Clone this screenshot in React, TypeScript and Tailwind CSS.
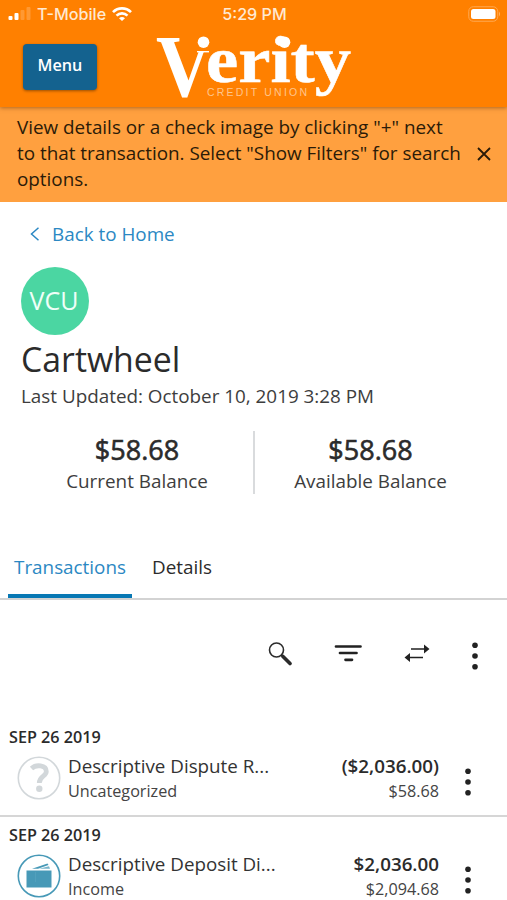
type Transaction = {
  date: string;
  title: string;
  category: string;
  amount: string;
  balance: string;
  icon: "unknown" | "wallet";
};

const transactions: Transaction[] = [
  { date: "SEP 26 2019", title: "Descriptive Dispute R...", category: "Uncategorized", amount: "($2,036.00)", balance: "$58.68", icon: "unknown" },
  { date: "SEP 26 2019", title: "Descriptive Deposit Di...", category: "Income", amount: "$2,036.00", balance: "$2,094.68", icon: "wallet" },
];

function Logo() {
  return (
    <svg width="200" height="68" viewBox="0 0 200 68" fill="#fff" className="shrink-0">
      <text x="1" y="64" fontFamily="Liberation Serif, serif" fontWeight="700" fontSize="89" textLength="57" lengthAdjust="spacingAndGlyphs">V</text>
      <rect x="32" y="0" width="40" height="20" fill="#ff8000" />
      <path d="M42 19h12v1.400h-12z" />
      <circle cx="48.500" cy="10.200" r="5.800" />
      <text x="51" y="50" fontFamily="Liberation Serif, serif" fontWeight="700" fontSize="65" textLength="145" lengthAdjust="spacingAndGlyphs" stroke="#fff" strokeWidth="0.5">erity</text>
      <circle cx="129.500" cy="10.200" r="5.800" />
      <text x="52" y="63.500" fontFamily="Liberation Sans, sans-serif" fontSize="10.500" textLength="100" fill="#ffc58c">CREDIT UNION</text>
    </svg>
  );
}

function Dots() {
  return (
    <svg width="6" height="28" viewBox="0 0 6 28" fill="#222" className="shrink-0">
      <circle cx="3" cy="3.200" r="2.800" />
      <circle cx="3" cy="14" r="2.800" />
      <circle cx="3" cy="24.800" r="2.800" />
    </svg>
  );
}

function StatusBar() {
  return (
    <div className="h-7 flex items-center justify-between font-['Inter',sans-serif] text-[16.2px] text-[#ffe9d2]">
      <div className="flex items-center w-[200px] pl-2">
        <svg width="24" height="14" viewBox="0 0 24 14" fill="#fff">
          <rect x="0.500" y="9" width="4" height="4" rx="1" />
          <rect x="6.500" y="6" width="4" height="7" rx="1" />
          <rect x="12.500" y="3" width="4" height="10" rx="1" opacity=".2" />
          <rect x="18.500" y="0" width="4" height="13" rx="1" opacity=".2" />
        </svg>
        <span className="ml-[5px] font-medium">T-Mobile</span>
        <svg width="20" height="14" viewBox="0 0 20 14" className="ml-[6px]" fill="none" stroke="#fff" strokeWidth="2.600">
          <path d="M1 5.200C6 .1 14 .1 19 5.200" />
          <path d="M4.500 8.600C7.600 5.600 12.400 5.600 15.500 8.600" />
          <path d="M7 11.200Q10 8.600 13 11.200L10 14z" fill="#fff" stroke="none" />
        </svg>
      </div>
      <span className="font-medium pl-[2px]">5:29 PM</span>
      <div className="w-[200px] pr-[6px] flex justify-end">
        <svg width="33" height="16" viewBox="0 0 33 16">
          <rect x="0.750" y="0.750" width="29" height="14.500" rx="4.500" fill="none" stroke="#ffa850" />
          <rect x="3" y="3" width="24.500" height="10" rx="2.500" fill="#fff" />
          <path d="M31 5.500q2 2.500 0 5z" fill="#ffb060" />
        </svg>
      </div>
    </div>
  );
}

function CategoryIcon({ icon }: { icon: Transaction["icon"] }) {
  if (icon === "unknown") {
    return (
      <svg width="44" height="44" viewBox="0 0 44 44" className="shrink-0">
        <circle cx="22" cy="22" r="20.700" fill="none" stroke="#d2d7da" strokeWidth="1.600" />
        <path d="M14.500 12.500C19 8.300 29.300 8.800 29.300 15.500C29.300 20.500 22.300 20 22.300 27" fill="none" stroke="#d2d7da" strokeWidth="4.800" />
        <circle cx="22.300" cy="32.700" r="3.200" fill="#d2d7da" />
      </svg>
    );
  }
  return (
    <svg width="44" height="44" viewBox="0 0 44 44" className="shrink-0">
      <circle cx="22" cy="22" r="20.700" fill="none" stroke="#4799b7" strokeWidth="1.600" />
      <path d="M9.500 16.500H34.500V33.500H9.500z" fill="#4799b7" />
      <path d="M15 14.800L30.500 9.500L31.500 11L21 14.800z" fill="#4799b7" />
      <path d="M22 14.800L32 12.200L33 14.800z" fill="#77b4cb" />
      <path d="M18.500 18V28" stroke="#58a3bf" strokeWidth=".7" />
    </svg>
  );
}

function TransactionRow({ item }: { item: Transaction }) {
  return (
    <li className="h-[98px] border-b-2 border-[#d6d6d6] pt-2 pl-[9px]">
      <div className="h-[21px] leading-[21px] text-[16.2px] font-semibold">{item.date}</div>
      <div className="flex items-start pl-2">
        <div className="pt-[8px]">
          <CategoryIcon icon={item.icon} />
        </div>
        <div className="ml-[7px] pt-[5px] w-[215px]">
          <div className="h-[26px] leading-[26px] text-[18.8px] whitespace-nowrap text-[#333]">{item.title}</div>
          <div className="leading-6 text-[16.2px] text-[#444]">{item.category}</div>
        </div>
        <div className="pt-[5px] w-[156px] text-right">
          <div className="h-[26px] leading-[26px] text-[18.8px] font-semibold">{item.amount}</div>
          <div className="leading-6 text-[16.2px] text-[#444]">{item.balance}</div>
        </div>
        <div className="ml-[26px] pt-[20px]">
          <Dots />
        </div>
      </div>
    </li>
  );
}

export default function App() {
  return (
    <main className="w-[507px] h-[900px] overflow-hidden bg-white font-['Open_Sans',sans-serif] text-[18.85px] text-[#2b2b2b]">
      <header className="relative h-[107px] bg-[#ff8000] shadow-[0_1px_4px_rgba(100,50,0,0.5)]">
        <StatusBar />
        <div className="flex items-start">
          <button className="ml-[23px] mt-4 w-[74px] h-[46px] rounded bg-[#14628f] text-white text-[16.2px] font-semibold leading-[43px] pb-[3px] shadow-[0_1px_3px_rgba(0,0,0,0.4)]">Menu</button>
          <div className="ml-[58px] mt-[4px]">
            <Logo />
          </div>
        </div>
      </header>

      <div className="h-[95px] bg-[#ffa03f] pl-[17px] pr-4 pt-2 flex text-[#2b1b08]">
        <p className="w-[450px] leading-[25.800px] whitespace-nowrap">
          View details or a check image by clicking "+" next<br />
          to that transaction. Select "Show Filters" for search<br />
          options.
        </p>
        <svg width="14" height="14" viewBox="0 0 14 14" className="ml-[10px] mt-[32px] shrink-0" stroke="#2b1b08" strokeWidth="1.800">
          <path d="M1 1L13 13M13 1L1 13" />
        </svg>
      </div>

      <a className="h-[65px] pt-[19px] pl-[30px] flex items-start text-[#2b88c3]">
        <svg width="10" height="14" viewBox="0 0 10 14" className="mt-[6px]" fill="none" stroke="#2b88c3" strokeWidth="1.500">
          <path d="M8.500 .8L1.500 7L8.500 13.200" />
        </svg>
        <span className="ml-3 leading-[26px]">Back to Home</span>
      </a>

      <section className="pl-[21px] h-[164px]">
        <div className="size-[68px] rounded-full bg-[#4bd6a2] text-[#effff8] text-[25px] flex items-center justify-center pr-[2px]">VCU</div>
        <h1 className="h-[47px] leading-[48px] text-[33.8px]">Cartwheel</h1>
        <p className="leading-[28px] text-[#3d3d3d]">Last Updated: October 10, 2019 3:28 PM</p>
      </section>

      <section className="h-[63px] flex px-[21px] text-center">
        <div className="w-[234px] border-r-2 border-[#d9dbdd]">
          <div className="h-[36px] leading-[37px] text-[27px] [-webkit-text-stroke:0.6px_#2b2b2b]">$58.68</div>
          <div className="leading-[28px] text-[#3d3d3d]">Current Balance</div>
        </div>
        <div className="w-[231px]">
          <div className="h-[36px] leading-[37px] text-[27px] [-webkit-text-stroke:0.6px_#2b2b2b]">$58.68</div>
          <div className="leading-[28px] text-[#3d3d3d]">Available Balance</div>
        </div>
      </section>

      <nav className="mt-[53px] h-[53px] px-2 flex border-b-2 border-[#d3d3d3]">
        <div className="w-[124px] h-[51px] text-center leading-[40px] text-[#2b88c3] border-b-4 border-[#0878b4]">Transactions</div>
        <div className="ml-5 leading-[40px]">Details</div>
      </nav>

      <div className="h-[119px] pt-[42px] pl-[268px] flex items-start">
        <svg width="24" height="24" viewBox="0 0 24 24" fill="none" stroke="#2b2b2b">
          <circle cx="8.500" cy="8" r="7" strokeWidth="1.600" />
          <path d="M13 12.500L15 14.500" strokeWidth="2" />
          <path d="M15 14.500L22 21.500" strokeWidth="3.600" strokeLinecap="round" />
        </svg>
        <svg width="28" height="20" viewBox="0 0 28 20" className="ml-[42px] mt-[2px]" stroke="#222" strokeWidth="2.700" strokeLinecap="round">
          <path d="M2 2.500H26.500M6 9H22.500M11.500 15.800H18" />
        </svg>
        <svg width="26" height="18" viewBox="0 0 26 18" className="ml-[42px] mt-[2px]" fill="#222">
          <path d="M7 4.200h13V.5L25.500 5L20 9.500V5.800H7zM19 12.700H6V9L.5 13.500L6 18v-3.700h13z" />
        </svg>
        <div className="ml-[42px]">
          <Dots />
        </div>
      </div>

      <ul>
        {transactions.map((item) => (
          <TransactionRow key={item.title} item={item} />
        ))}
      </ul>
    </main>
  );
}
